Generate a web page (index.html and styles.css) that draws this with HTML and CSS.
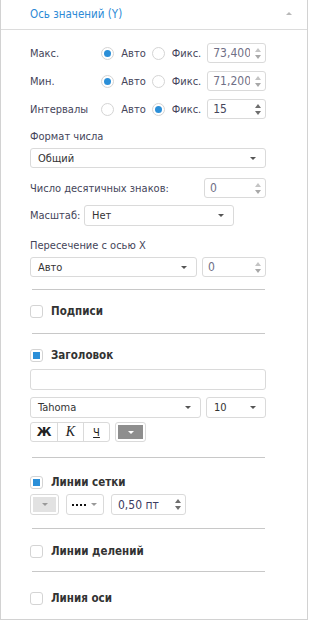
FILE: index.html
```html
<!DOCTYPE html>
<html lang="ru">
<head>
  <meta charset="UTF-8" />
  <meta name="viewport" content="width=device-width, initial-scale=1.0" />
  <title>Ось значений</title>
  <link rel="stylesheet" href="styles.css">
</head>
<body>
  <div class="panel">
    <div class="panel-header">
      <span class="panel-title">Ось значений (Y)</span>
      <span class="collapse-arrow"></span>
    </div>

    <div class="panel-body">
      <div class="row r-max">
        <span class="label w-label">Макс.</span>
        <span class="radio checked"></span><span class="opt">Авто</span>
        <span class="radio"></span><span class="opt">Фикс.</span>
        <div class="spin w-spin disabled"><span class="val">73,400</span><span class="arrows"><i class="up"></i><i class="down"></i></span></div>
      </div>
      <div class="row r-min">
        <span class="label w-label">Мин.</span>
        <span class="radio checked"></span><span class="opt">Авто</span>
        <span class="radio"></span><span class="opt">Фикс.</span>
        <div class="spin w-spin disabled"><span class="val">71,200</span><span class="arrows"><i class="up"></i><i class="down"></i></span></div>
      </div>
      <div class="row r-int">
        <span class="label w-label">Интервалы</span>
        <span class="radio"></span><span class="opt">Авто</span>
        <span class="radio checked"></span><span class="opt">Фикс.</span>
        <div class="spin w-spin"><span class="val">15</span><span class="arrows"><i class="up"></i><i class="down"></i></span></div>
      </div>

      <div class="caption c-format">Формат числа</div>
      <div class="select s-format"><span>Общий</span><i class="caret"></i></div>

      <div class="row r-dec">
        <span class="label grow">Число десятичных знаков:</span>
        <div class="spin s-dec disabled"><span class="val">0</span><span class="arrows"><i class="up"></i><i class="down"></i></span></div>
      </div>

      <div class="row r-scale">
        <span class="label">Масштаб:</span>
        <div class="select s-scale"><span>Нет</span><i class="caret"></i></div>
      </div>

      <div class="caption c-cross">Пересечение с осью X</div>
      <div class="row r-cross">
        <div class="select s-cross"><span>Авто</span><i class="caret"></i></div>
        <div class="spin s-cross-val disabled"><span class="val">0</span><span class="arrows"><i class="up"></i><i class="down"></i></span></div>
      </div>

      <div class="sep sep-1"></div>
      <div class="check-row k-labels"><span class="checkbox"></span><b>Подписи</b></div>

      <div class="sep sep-2"></div>
      <div class="check-row k-title"><span class="checkbox checked"></span><b>Заголовок</b></div>
      <div class="text-input"></div>
      <div class="row r-font">
        <div class="select s-font"><span>Tahoma</span><i class="caret"></i></div>
        <div class="select s-size"><span>10</span><i class="caret"></i></div>
      </div>
      <div class="row r-style">
        <div class="btn-group">
          <span class="btn bold">Ж</span><span class="btn italic">К</span><span class="btn under">Ч</span>
        </div>
        <div class="color-btn dark"><i class="caret white"></i></div>
      </div>

      <div class="sep sep-3"></div>
      <div class="check-row k-grid"><span class="checkbox checked"></span><b>Линии сетки</b></div>
      <div class="row r-grid">
        <div class="color-btn light"><i class="caret"></i></div>
        <div class="dash-btn"><span class="dots"></span><i class="caret"></i></div>
        <div class="spin s-width"><span class="val">0,50 пт</span><span class="arrows"><i class="up"></i><i class="down"></i></span></div>
      </div>

      <div class="sep sep-4"></div>
      <div class="check-row k-ticks"><span class="checkbox"></span><b>Линии делений</b></div>

      <div class="sep sep-5"></div>
      <div class="check-row k-axis"><span class="checkbox"></span><b>Линия оси</b></div>
    </div>
  </div>
</body>
</html>
```

FILE: styles.css
```css
* {
  margin: 0;
  padding: 0;
  box-sizing: border-box;
}

body {
  background: #fff;
  font-family: 'DejaVu Sans Condensed', 'DejaVu Sans', sans-serif;
  font-size: 11px;
  color: #45455a;
}

.panel {
  width: 308px;
  height: 620px;
  border: 1px solid #d2d2d2;
  border-top: none;
  background: #fff;
}

.panel-header {
  height: 30px;
  border-bottom: 1px solid #dcdcdc;
  display: flex;
  align-items: center;
  padding: 0 15px 0 29px;
}

.panel-title {
  flex: 1;
  color: #2d8ad6;
  font-size: 11.5px;
  padding-bottom: 2px;
}

.collapse-arrow {
  width: 0;
  height: 0;
  border-left: 3px solid transparent;
  border-right: 3px solid transparent;
  border-bottom: 3px solid #b8b8b8;
  margin-bottom: 2px;
}

.panel-body {
  padding: 13px 41px 0 29px;
  display: flex;
  flex-direction: column;
}

.row {
  display: flex;
  align-items: center;
  height: 20px;
}

.label {
  white-space: nowrap;
}

.w-label {
  width: 73px;
}

.grow {
  flex: 1;
}

.radio {
  width: 13px;
  height: 13px;
  border: 1px solid #d4d4d4;
  border-radius: 50%;
  position: relative;
  flex-shrink: 0;
}

.radio.checked::after {
  content: "";
  position: absolute;
  left: 2px;
  top: 2px;
  width: 7px;
  height: 7px;
  border-radius: 50%;
  background: #2b8fd8;
}

.opt {
  margin: 0 6px 0 7px;
  white-space: nowrap;
}

.spin {
  height: 20px;
  border: 1px solid #dadada;
  border-radius: 3px;
  display: flex;
  align-items: center;
  padding-left: 5px;
  color: #45455a;
  font-size: 12px;
  overflow: hidden;
}

.spin .val {
  flex: 1;
  overflow: hidden;
  white-space: nowrap;
}

.spin .arrows {
  width: 15px;
  display: flex;
  flex-direction: column;
  align-items: center;
  gap: 3px;
  flex-shrink: 0;
}

.spin .up,
.spin .down {
  width: 0;
  height: 0;
  border-left: 3px solid transparent;
  border-right: 3px solid transparent;
}

.spin .up {
  border-bottom: 4px solid #6e6e6e;
}

.spin .down {
  border-top: 4px solid #6e6e6e;
}

.spin.disabled .up {
  border-bottom-color: #c4c4c4;
}

.spin.disabled .down {
  border-top-color: #a8a8a8;
}

.spin.disabled {
  color: #6f6f86;
}

.w-spin {
  width: 60px;
  margin-left: auto;
}

.r-min,
.r-int {
  margin-top: 8px;
}

.caption {
  height: 14px;
  line-height: 14px;
  white-space: nowrap;
}

.c-format {
  margin-top: 11px;
}

.select {
  height: 20px;
  border: 1px solid #dadada;
  border-radius: 3px;
  display: flex;
  align-items: center;
  padding: 0 9px 0 7px;
  color: #333;
  font-size: 11px;
}

.select span {
  flex: 1;
  white-space: nowrap;
}

.caret {
  width: 0;
  height: 0;
  border-left: 3px solid transparent;
  border-right: 3px solid transparent;
  border-top: 3px solid #555;
}

.caret.white {
  border-top-color: #fff;
}

.s-format {
  margin-top: 4px;
}

.r-dec {
  margin-top: 10px;
}

.s-dec {
  width: 62px;
}

.r-scale {
  margin-top: 7px;
}

.s-scale {
  width: 150px;
  margin-left: auto;
  margin-right: 32px;
  height: 21px;
}

.c-cross {
  margin-top: 14px;
}

.r-cross {
  margin-top: 4px;
  gap: 5px;
}

.s-cross {
  width: 167px;
}

.s-cross-val {
  flex: 1;
}

.sep {
  height: 1px;
  background: #c8c8c8;
  margin-left: 2px;
  margin-right: 1px;
}

.sep-1 {
  margin-top: 12px;
}

.check-row {
  display: flex;
  align-items: center;
  height: 14px;
  gap: 8px;
  color: #333;
}

.check-row b {
  font-size: 11.5px;
}

.checkbox {
  width: 13px;
  height: 13px;
  border: 1px solid #d4d4d4;
  border-radius: 3px;
  position: relative;
  flex-shrink: 0;
}

.checkbox.checked::after {
  content: "";
  position: absolute;
  left: 2px;
  top: 2px;
  width: 7px;
  height: 7px;
  background: #2b8fd8;
}

.k-labels {
  margin-top: 14px;
}

.sep-2 {
  margin-top: 15px;
}

.k-title {
  margin-top: 14px;
}

.text-input {
  height: 21px;
  border: 1px solid #dadada;
  border-radius: 3px;
  margin-top: 7px;
}

.r-font {
  margin-top: 7px;
  height: 21px;
  gap: 5px;
}

.s-font {
  width: 171px;
  height: 21px;
}

.s-size {
  flex: 1;
  height: 21px;
}

.r-style {
  margin-top: 4px;
  gap: 5px;
}

.btn-group {
  display: flex;
  height: 20px;
  border: 1px solid #dadada;
  border-radius: 3px;
}

.btn {
  width: 26px;
  display: flex;
  align-items: center;
  justify-content: center;
  color: #222;
  font-size: 12px;
}

.btn + .btn {
  border-left: 1px solid #dadada;
}

.btn.bold {
  font-weight: bold;
  font-family: 'DejaVu Sans', sans-serif;
}

.btn.italic {
  font-family: 'Liberation Serif', serif;
  font-style: italic;
  font-size: 14px;
}

.btn.under {
  text-decoration: underline;
  font-size: 11px;
}

.color-btn {
  width: 31px;
  height: 20px;
  border: 1px solid #dadada;
  border-radius: 3px;
  padding: 2px;
  display: flex;
  align-items: center;
  justify-content: center;
  background-clip: content-box;
}

.color-btn.dark {
  background-color: #8e8e8e;
}

.color-btn.light {
  width: 29px;
  height: 21px;
  background-color: #e2e2e2;
}

.color-btn.light .caret {
  border-top-color: #999;
}

.sep-3 {
  margin-top: 15px;
}

.k-grid {
  margin-top: 17px;
}

.r-grid {
  margin-top: 5px;
  height: 21px;
  gap: 7px;
}

.dash-btn {
  width: 38px;
  height: 21px;
  border: 1px solid #dadada;
  border-radius: 3px;
  display: flex;
  align-items: center;
  padding: 0 6px 0 5px;
  gap: 5px;
}

.dash-btn .dots {
  flex: 1;
  height: 2px;
  background: repeating-linear-gradient(to right, #111 0 2px, transparent 2px 4px);
}

.dash-btn .caret {
  border-top-color: #999;
}

.s-width {
  width: 75px;
  height: 21px;
  color: #3b3b60;
  padding-left: 6px;
}

.sep-4 {
  margin-top: 13px;
}

.k-ticks {
  margin-top: 15px;
}

.sep-5 {
  margin-top: 13px;
}

.k-axis {
  margin-top: 19px;
}
```
